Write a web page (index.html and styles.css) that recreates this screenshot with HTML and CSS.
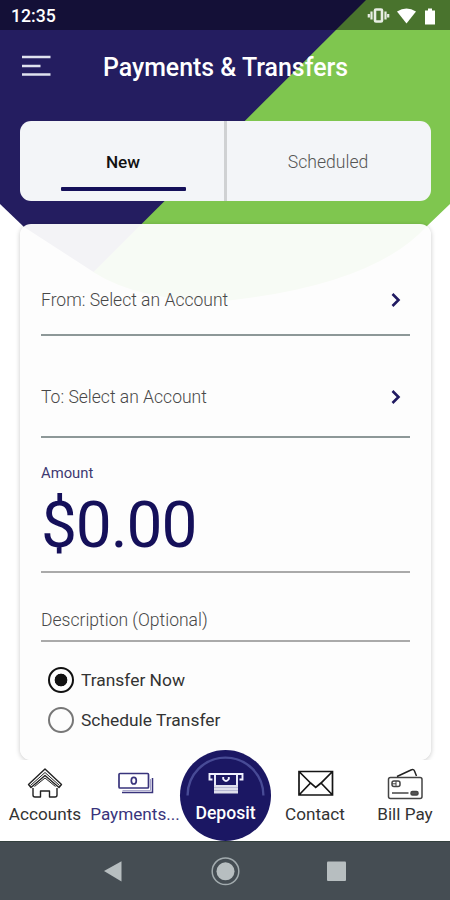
FILE: index.html
```
<!DOCTYPE html>
<html lang="en">
<head>
<meta charset="utf-8">
<meta name="viewport" content="width=device-width, initial-scale=1">
<title>Payments &amp; Transfers</title>
<link rel="stylesheet" href="styles.css">
</head>
<body>
<div class="screen">
  <svg class="backdrop" viewBox="0 0 450 320" aria-hidden="true">
    <path fill="#7fc64f" d="M355 0H450V204L427 226Q374 285 225 301Q140 302 93 272Z"/>
    <path fill="#241d60" d="M0 0H366L93.500 272L24 227L0 204Z"/>
  </svg>
  <header class="status">
    <span class="clock">12:35</span>
    <svg class="status-icons" viewBox="0 0 72 20" aria-hidden="true">
      <rect x="8" y="3.5" width="7" height="12" rx="1" fill="none" stroke="#e8eee4" stroke-width="2.6"/>
      <path d="M4.500 5.500v8M18.500 5.500v8M1.800 8v3.500M21.200 8v3.500" stroke="#e8eee4" stroke-width="2.200"/>
      <path d="M30 5.500Q39.500-.5 49 5.500L39.500 17.500Z" fill="#fff"/>
      <path d="M58 4.500h3V2.500h4v2h3V18.500H58Z" fill="#fff"/>
    </svg>
  </header>
  <div class="appbar">
    <svg class="menu" viewBox="0 0 30 24" aria-hidden="true"><path d="M1 3H29.500M1 12H19.500M1 20.500H29.500" stroke="#e0e2ef" stroke-width="2.600"/></svg>
    <h1>Payments &amp; Transfers</h1>
  </div>
  <nav class="tabs">
    <div class="tab tab-active"><span>New</span></div>
    <div class="tab"><span>Scheduled</span></div>
  </nav>
  <main class="card">
    <div class="field from"><span>From: Select an Account</span><svg class="chevron" viewBox="0 0 10 16"><path d="M1.500 2L7.500 8L1.500 14"/></svg></div>
    <div class="field to"><span>To: Select an Account</span><svg class="chevron" viewBox="0 0 10 16"><path d="M1.500 2L7.500 8L1.500 14"/></svg></div>
    <div class="amount"><span class="amount-label">Amount</span><span class="amount-value">$0.00</span></div>
    <div class="field description"><span>Description (Optional)</span></div>
    <div class="options">
      <div class="option"><i class="radio radio-on"></i><span>Transfer Now</span></div>
      <div class="option"><i class="radio"></i><span>Schedule Transfer</span></div>
    </div>
  </main>
  <nav class="bottom">
    <div class="item">
      <svg viewBox="0 0 40 34" fill="none" stroke="#222" stroke-width="1.400" stroke-linejoin="round"><path d="M3.500 17.500L20 2L36.500 17.500L34 20.500L20 8.500L6 20.500Z"/><path d="M5.500 18.500L20 5.500L34.500 18.500" stroke-width="1"/><path d="M8 21V28Q8 30 10 30H15.500V24H24.500V30H30Q32 30 32 28V21"/><path d="M9.500 19.500L20 11L30.500 19.500" stroke-width="1"/></svg>
      <span>Accounts</span>
    </div>
    <div class="item current">
      <svg viewBox="0 0 40 34" fill="none" stroke="#39347c" stroke-width="1.700"><rect x="4" y="6.500" width="29.500" height="14.500" rx="1"/><ellipse cx="18.800" cy="13.700" rx="2.500" ry="3.300"/><path d="M7 25.500H37.500V11" stroke-width="1.500"/><path d="M7.500 23.600H35.500V12" stroke="#a5a2c9" stroke-width="1"/></svg>
      <span>Payments...</span>
    </div>
    <div class="deposit">
      <svg class="arc" viewBox="0 0 90 90" fill="none"><path d="M7.500 45A37.500 37.500 0 0 1 82.500 45" stroke="#484b96" stroke-width="2.300"/></svg>
      <svg class="machine" viewBox="0 0 38 24" fill="none" stroke="#f1f2ff" stroke-width="1.900"><path d="M5.500 8.500H2.500V3H35.500V8.500H32.500M8 3V15M30 3V15"/><path d="M16.200 6V8Q19 12 21.800 8V6"/><path d="M7 14H31V22.500H7Z" fill="#dedfeb" stroke="none"/><path d="M7 16.500H31M7 19.500H31" stroke="#a5a7c9" stroke-width=".7"/></svg>
      <span>Deposit</span>
    </div>
    <div class="item">
      <svg viewBox="0 0 40 34" fill="none" stroke="#151515" stroke-width="1.700"><path d="M4 4.500H37.500V28H4ZM4 4.500L15.500 16L20.700 20.500L26 16L37.500 4.500M4 28L15.500 16M37.500 28L26 16"/></svg>
      <span>Contact</span>
    </div>
    <div class="item">
      <svg viewBox="0 0 40 34" fill="none" stroke="#444" stroke-width="1.500"><rect x="3.500" y="10.500" width="33.500" height="21" rx="2"/><path d="M12 9.500L26 3Q28.500 1.800 29.500 4L31.500 9" stroke="#222"/><rect x="7" y="14" width="8" height="5.500" rx="2"/><path d="M7 16.800H11M11 14V19.500" stroke-width="1"/><path d="M7 26H23.500"/><rect x="26" y="24.500" width="7" height="3.500" rx="1.500" fill="#555"/></svg>
      <span>Bill Pay</span>
    </div>
  </nav>
  <footer class="system">
    <svg viewBox="0 0 450 60" aria-hidden="true"><path d="M104 30L121.500 20.300V40.500Z" fill="#b7bec0"/><circle cx="225.500" cy="30.300" r="9" fill="#b7bec0"/><circle cx="225.500" cy="30.300" r="13.300" fill="none" stroke="#a2abae" stroke-width="1.500"/><rect x="327" y="20.500" width="19" height="19.500" rx="1" fill="#b7bec0"/></svg>
  </footer>
</div>
</body>
</html>
```
FILE: styles.css
```
* { box-sizing: border-box; }
html, body { margin: 0; }
body { font-family: Roboto, "Liberation Sans", sans-serif; background: #fff; }
svg { display: block; flex: none; }
span, h1 { white-space: nowrap; }
.screen { position: relative; width: 450px; height: 900px; overflow: hidden; display: flex; flex-direction: column; isolation: isolate; }
.backdrop { position: absolute; z-index: -1; top: 0; left: 0; width: 450px; height: 320px; }
.status { height: 30px; flex: none; display: flex; align-items: center; justify-content: space-between; padding: 2px 11px 0 11px; background: rgba(0, 0, 0, .42); }
.clock { color: #fff; font-size: 17.7px; font-weight: 500; }
.status-icons { width: 72px; height: 20px; margin-bottom: 1px; }
.appbar { height: 91px; flex: none; display: flex; padding: 23px 21px 0; gap: 52px; }
.menu { width: 30px; height: 24px; margin-top: 1px; }
h1 { margin: 1px 0 0; color: #fff; font-size: 24.9px; line-height: 27px; font-weight: 500; }
.tabs { height: 80px; flex: none; margin: 0 19px 0 20px; display: flex; border-radius: 11px; overflow: hidden; background: #f3f5f8; }
.tab { flex: 1; display: flex; flex-direction: column; align-items: center; padding: 30px 2px 0 0; font-size: 17.6px; line-height: 22px; font-weight: 300; color: #555; }
.tab + .tab { border-left: 3px solid #cfd1d3; }
.tab-active { flex: 0 0 204px; padding: 30px 0 0 2px; color: #111; font-size: 17.2px; font-weight: 500; }
.tab-active::after { content: ""; width: 125px; height: 4px; margin-top: 14px; border-radius: 1px; background: #15105a; }
.card { height: 536px; flex: none; margin: 23px 19px 0 20px; padding: 0 21px; border-radius: 11px; background: rgba(253, 253, 253, .955); box-shadow: 0 1px 5px rgba(0, 0, 0, .22); }
.field { display: flex; justify-content: space-between; font-size: 17.55px; line-height: 22px; font-weight: 300; color: #484848; border-bottom: 2px solid #8d9898; }
.from { height: 112px; padding-top: 65px; }
.to { height: 102px; padding-top: 50px; }
.chevron { width: 10px; height: 16px; margin: 3px 9px 0 0; fill: none; stroke: #201a61; stroke-width: 2.6; }
.amount { height: 135px; padding-top: 26px; display: flex; flex-direction: column; color: #15105a; border-bottom: 2px solid #aaa; }
.amount-label { font-size: 14.8px; line-height: 18px; color: #3d3972; }
.amount-value { font-size: 64px; line-height: 76px; margin-top: 6px; letter-spacing: -1.1px; }
.description { height: 69px; padding-top: 36px; border-color: #aaa; }
.options { padding: 25px 0 0 7px; display: flex; flex-direction: column; gap: 14px; }
.option { height: 26px; display: flex; align-items: center; gap: 7px; font-size: 17.4px; color: #333; }
.radio { width: 26px; height: 26px; border: 2px solid #777; border-radius: 50%; flex: none; }
.radio-on { border: 2.5px solid #111; background: radial-gradient(circle, #111 0 6px, transparent 6.700px); }
.bottom { position: relative; height: 81px; flex: none; background: #fff; display: grid; grid-template-columns: repeat(5, 90px); }
.item { display: flex; flex-direction: column; align-items: center; padding-top: 7px; font-size: 17.15px; line-height: 22px; color: #333; }
.item svg { width: 40px; height: 34px; margin-bottom: 2px; }
.current { color: #39347c; }
.deposit { position: relative; width: 91px; height: 91px; margin-top: -10px; border-radius: 50%; background: #1b1763; color: #fff; display: flex; flex-direction: column; align-items: center; padding-top: 21px; font-size: 17.6px; font-weight: 500; line-height: 22px; }
.arc { position: absolute; top: 0; left: 0; width: 91px; height: 91px; }
.machine { width: 38px; height: 24px; margin-bottom: 7px; }
.system { height: 59px; flex: none; background: #454d53; border-top: 1px solid #34413f; }
.system svg { width: 450px; height: 60px; margin-top: -1px; }
```
